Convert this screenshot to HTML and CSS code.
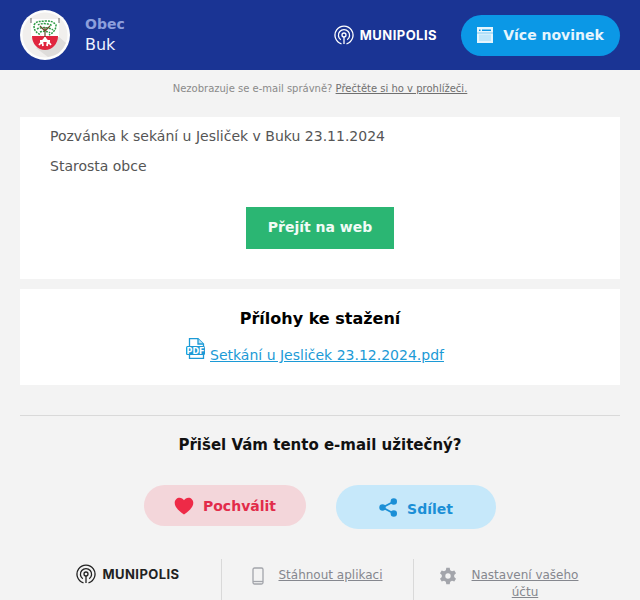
FILE: index.html
```html
<!DOCTYPE html>
<html lang="cs">
<head>
<meta charset="utf-8">
<title>Obec Buk</title>
<link rel="stylesheet" href="styles.css">
</head>
<body>
<header class="header">
  <div class="brand">
    <div class="crest">
      <svg width="50" height="50" viewBox="0 0 50 50">
        <circle cx="25" cy="25" r="25" fill="#fdfdfd"/>
        <circle cx="25" cy="25" r="22.500" fill="#f1efed"/>
        <path d="M38 26L46 33A22.500 22.500 0 0 1 28 47L16 38Z" fill="#dedcda"/>
        <path d="M11 9H39V27H11Z" fill="#fff"/>
        <path d="M12 26H38C38 34 32 40 25 40C18 40 12 34 12 26Z" fill="#e0263f"/>
        <g fill="none" stroke="#2f9a46" stroke-width="1.500" stroke-dasharray="2 1">
          <path d="M14 15C17 10 21 12 25 11C30 11 33 11 36 15C36 20 33 23 29 25"/>
          <path d="M14 16C14 21 17 23 21 25"/>
          <path d="M18 15C20 13 30 13 32 16M17 19C21 17 29 17 33 20M20 22C22 21 28 21 30 23"/>
        </g>
        <path d="M25 17V28M25 21L20 16M25 21L30 16" stroke="#6b4a2a" stroke-width="1.200" fill="none"/>
        <path d="M25 27V31M25 28L19 35M25 28L31 35M20 31H30M22 30L23 36M28 30L27 36" stroke="#fff" stroke-width="1.800" fill="none"/>
        <path d="M11 8V13M39 8V13" stroke="#666" stroke-width="1"/>
      </svg>
    </div>
    <div class="brand-text">
      <span class="brand-kicker">Obec</span>
      <span class="brand-name">Buk</span>
    </div>
  </div>
  <div class="header-right">
    <div class="logo logo-light">
      <svg class="logo-icon" width="20" height="20" viewBox="0 0 20 20" fill="none" stroke="currentColor" stroke-width="1.300">
        <path d="M7.500 18.800A9 9 0 1 1 12.500 18.800"/>
        <path d="M6.800 14.800A5.600 5.600 0 1 1 13.200 14.800"/>
        <circle cx="10" cy="10" r="2"/>
        <path d="M10 12V19"/>
      </svg>
      <span>MUNIPOLIS</span>
    </div>
    <a class="more-btn" href="#">
      <svg width="16" height="16" viewBox="0 0 16 16">
        <path fill="#e6f5fd" d="M0 0H16V16H0Z"/>
        <path fill="#0b98e6" d="M2 2.500H3.500V4H2ZM5 2.500H14V4H5Z"/>
        <path fill="#7cc9f2" d="M0 5.500H16V6.500H0Z"/>
        <path fill="#bfe6fa" d="M2 7.500H14V14H2Z"/>
      </svg>
      <span>Více novinek</span>
    </a>
  </div>
</header>

<p class="preheader">Nezobrazuje se e-mail správně? <a href="#">Přečtěte si ho v prohlížeči.</a></p>

<main class="content">
  <section class="card card-message">
    <p class="msg">Pozvánka k sekání u Jesliček v Buku 23.11.2024</p>
    <p class="msg">Starosta obce</p>
    <div class="cta-row"><a class="cta" href="#">Přejít na web</a></div>
  </section>

  <section class="card card-files">
    <h2 class="files-title">Přílohy ke stažení</h2>
    <div class="file-row">
      <svg class="pdf-icon" width="19" height="22" viewBox="0 0 19 22">
        <path d="M3.500 .7H12L17.500 6V20.300H3.500Z" fill="#fff" stroke="#1c9ad6" stroke-width="1.300"/>
        <path d="M12 .7V6H17.500" fill="#bfe3f5" stroke="#1c9ad6" stroke-width="1.300"/>
        <rect x="0" y="8" width="19" height="9" rx="1.500" fill="#1c9ad6"/>
        <text x="9.500" y="15.500" class="pdf-label">PDF</text>
      </svg>
      <a class="file-link" href="#">Setkání u Jesliček 23.12.2024.pdf</a>
    </div>
  </section>

  <hr class="rule">

  <h2 class="useful">Přišel Vám tento e-mail užitečný?</h2>

  <div class="actions">
    <a class="action action-like" href="#">
      <svg width="20" height="18" viewBox="0 0 20 18"><path fill="#ee2a47" d="M10 17.500C3 12.500 .7 9.500 .7 5.800C.7 2.800 3 .7 5.600 .7C7.400 .7 9 1.600 10 3.200C11 1.600 12.600 .7 14.400 .7C17 .7 19.300 2.800 19.300 5.800C19.300 9.500 17 12.500 10 17.500Z"/></svg>
      <span>Pochválit</span>
    </a>
    <a class="action action-share" href="#">
      <svg width="19" height="19" viewBox="0 0 19 19" fill="#1b8fd6"><circle cx="14.800" cy="3.500" r="3.200"/><circle cx="3.500" cy="9.500" r="3.200"/><circle cx="14.800" cy="15.500" r="3.200"/><path d="M3.500 9.500L14.800 3.500M3.500 9.500L14.800 15.500" stroke="#1b8fd6" stroke-width="1.800"/></svg>
      <span class="share-label">Sdílet</span>
    </a>
  </div>

  <footer class="footer">
    <div class="foot-cell foot-logo">
      <div class="logo logo-dark">
        <svg class="logo-icon" width="20" height="20" viewBox="0 0 20 20" fill="none" stroke="currentColor" stroke-width="1.300">
          <path d="M7.500 18.800A9 9 0 1 1 12.500 18.800"/>
          <path d="M6.800 14.800A5.600 5.600 0 1 1 13.200 14.800"/>
          <circle cx="10" cy="10" r="2"/>
          <path d="M10 12V19"/>
        </svg>
        <span>MUNIPOLIS</span>
      </div>
    </div>
    <div class="foot-cell foot-app">
      <svg width="12" height="18" viewBox="0 0 12 18" fill="none" stroke="#a3a5ab" stroke-width="1.300"><rect x="1" y="1" width="10" height="16" rx="1.500"/><path d="M1 14.500H11" /></svg>
      <a href="#">Stáhnout aplikaci</a>
    </div>
    <div class="foot-cell foot-settings">
      <svg width="18" height="18" viewBox="0 0 18 18"><path fill="#a3a5ab" fill-rule="evenodd" d="M7.300 .8H10.700L11.200 3.200L13 4.200L15.300 3.400L17 6.300L15.200 7.900V10.100L17 11.700L15.300 14.600L13 13.800L11.200 14.800L10.700 17.200H7.300L6.800 14.800L5 13.800L2.700 14.600L1 11.700L2.800 10.100V7.900L1 6.300L2.700 3.400L5 4.200L6.800 3.200ZM9 6.300A2.700 2.700 0 1 0 9 11.700A2.700 2.700 0 1 0 9 6.300Z"/></svg>
      <a href="#">Nastavení vašeho účtu</a>
    </div>
  </footer>
</main>
</body>
</html>
```

FILE: styles.css
```css
* { box-sizing: border-box; }
html, body { height: 600px; overflow: hidden; }
body {
  margin: 0;
  background: #f3f3f3;
  font-family: "DejaVu Sans", sans-serif;
  color: #555;
}
.header {
  height: 70px;
  background: #1a3494;
  display: flex;
  align-items: center;
  justify-content: space-between;
  padding: 0 20px;
}
.brand { display: flex; align-items: center; gap: 15px; }
.crest { width: 50px; height: 50px; }
.crest svg { display: block; }
.brand-text { display: flex; flex-direction: column; }
.brand-kicker { font-size: 14px; line-height: 20px; font-weight: 700; color: #8d9fdb; }
.brand-name { font-size: 16px; line-height: 22px; color: #eef2ff; }
.header-right { display: flex; align-items: center; gap: 24px; }
.logo {
  display: flex;
  align-items: center;
  gap: 6px;
  font-family: "Inter", "Liberation Sans", sans-serif;
  font-weight: 700;
  font-size: 13px;
  letter-spacing: .45px;
}
.logo-light { color: #fff; }
.logo-dark { color: #222; }
.logo-icon { display: block; }
.more-btn {
  width: 159px;
  height: 41px;
  border-radius: 21px;
  background: #0b98e6;
  display: flex;
  align-items: center;
  justify-content: center;
  gap: 10px;
  color: #e6f5fd;
  font-size: 14px;
  font-weight: 700;
  text-decoration: none;
}
.preheader {
  margin: 12px 0 0;
  height: 35px;
  text-align: center;
  font-size: 10px;
  line-height: 13px;
  color: #8a8a8a;
}
.preheader a { color: #6f6f6f; }
.content { padding: 0 20px; }
.card { background: #fff; }
.card-message { height: 162px; padding: 10px 30px 0; }
.msg { margin: 0 0 12px; font-size: 14px; line-height: 18px; color: #555; }
.cta-row { display: flex; justify-content: center; margin-top: 32px; }
.cta {
  width: 148px;
  height: 42px;
  background: #2bb673;
  color: #f1fbf6;
  font-size: 14px;
  font-weight: 700;
  line-height: 40px;
  text-align: center;
  text-decoration: none;
}
.card-files { margin-top: 10px; height: 96px; padding-top: 20px; text-align: center; }
.files-title { margin: 0; font-size: 16px; line-height: 20px; color: #000; font-weight: 700; }
.file-row { display: flex; justify-content: center; align-items: flex-end; margin-top: 9px; gap: 5px; padding-right: 10px; }
.pdf-icon { display: block; margin-bottom: 5px; }
.pdf-label { font: 700 8px "DejaVu Sans", sans-serif; fill: #fff; text-anchor: middle; }
.file-link { font-size: 14px; line-height: 20px; color: #1c9ad6; }
.rule { margin: 30px 0 0; border: 0; border-top: 1px solid #d9d9d9; }
.useful { margin: 19px 0 0; font-size: 15px; line-height: 20px; text-align: center; color: #111; font-weight: 700; }
.actions { display: flex; justify-content: center; align-items: flex-start; gap: 30px; margin-top: 30px; }
.action {
  display: flex;
  align-items: center;
  justify-content: center;
  gap: 9px;
  border-radius: 22px;
  font-size: 14px;
  font-weight: 700;
  text-decoration: none;
}
.action-like { width: 162px; height: 41px; background: #f3d6da; color: #e22c4a; }
.action-share { width: 160px; height: 44px; background: #c6e8fa; color: #1b8fd6; }
.share-label { padding-top: 3px; }
.footer { display: flex; margin: 30px 0 0; padding: 0 11px; }
.foot-cell { display: flex; height: 60px; padding-top: 8px; }
.foot-logo { width: 191px; justify-content: center; border-right: 1px solid #d9d9d9; padding-left: 4px; padding-top: 5px; }
.foot-logo .logo { height: 20px; }
.foot-app { width: 192px; justify-content: center; gap: 14px; border-right: 1px solid #d9d9d9; }
.foot-settings { width: 186px; gap: 8px; padding-left: 25px; }
.foot-app svg, .foot-settings svg { flex: none; }
.foot-cell a { font-size: 12px; line-height: 17px; color: #85878e; text-align: center; }
.foot-settings a { width: 120px; }
```
